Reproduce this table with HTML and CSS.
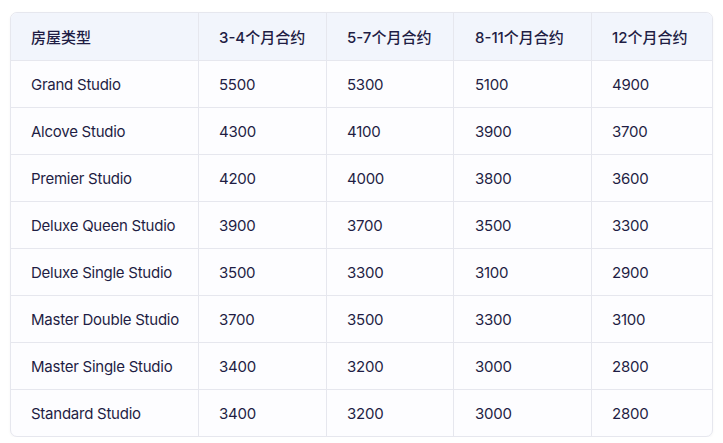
FILE: index.html
```html
<!DOCTYPE html>
<html lang="zh">
<head>
<meta charset="utf-8">
<title>房屋类型价格表</title>
<link rel="stylesheet" href="styles.css">
</head>
<body>
<div class="wrap">
<table class="price">
<colgroup>
<col class="c1"><col class="c2"><col class="c3"><col class="c4"><col class="c5">
</colgroup>
<thead>
<tr><th>房屋类型</th><th>3-4个月合约</th><th>5-7个月合约</th><th>8-11个月合约</th><th>12个月合约</th></tr>
</thead>
<tbody>
<tr><td>Grand Studio</td><td>5500</td><td>5300</td><td>5100</td><td>4900</td></tr>
<tr><td>Alcove Studio</td><td>4300</td><td>4100</td><td>3900</td><td>3700</td></tr>
<tr><td>Premier Studio</td><td>4200</td><td>4000</td><td>3800</td><td>3600</td></tr>
<tr><td>Deluxe Queen Studio</td><td>3900</td><td>3700</td><td>3500</td><td>3300</td></tr>
<tr><td>Deluxe Single Studio</td><td>3500</td><td>3300</td><td>3100</td><td>2900</td></tr>
<tr><td>Master Double Studio</td><td>3700</td><td>3500</td><td>3300</td><td>3100</td></tr>
<tr><td>Master Single Studio</td><td>3400</td><td>3200</td><td>3000</td><td>2800</td></tr>
<tr><td>Standard Studio</td><td>3400</td><td>3200</td><td>3000</td><td>2800</td></tr>
</tbody>
</table>
</div>
</body>
</html>
```
FILE: styles.css
```css
html, body {
  margin: 0;
  padding: 0;
  background: #ffffff;
}
.wrap {
  padding: 12px 0 0 10px;
}
.price {
  width: 701px;
  table-layout: fixed;
  border-collapse: separate;
  border-spacing: 0;
  border: 1px solid #e6e7ee;
  border-radius: 7px;
  overflow: hidden;
  background: #fdfdff;
  box-shadow: 0 1px 3px rgba(20, 20, 60, 0.04);
  font-family: Inter, "Noto Sans CJK SC", sans-serif;
  font-size: 15px;
  color: #1f1d44;
}
.c1 { width: 188px; }
.c2 { width: 128px; }
.c3 { width: 127px; }
.c4 { width: 138px; }
.c5 { width: 120px; }
.price th, .price td {
  text-align: left;
  padding: 0 0 0 20px;
  border-right: 1px solid #e6e7ee;
  border-bottom: 1px solid #e6e7ee;
  white-space: nowrap;
}
.price th:nth-child(4), .price td:nth-child(4) {
  padding-left: 21px;
}
.price th:last-child, .price td:last-child {
  border-right: none;
}
.price tbody tr:last-child td {
  border-bottom: none;
}
.price th {
  height: 47px;
  background: #f2f5fc;
  font-weight: 500;
}
.price td {
  height: 46px;
  font-weight: 400;
  letter-spacing: -0.25px;
}
```
